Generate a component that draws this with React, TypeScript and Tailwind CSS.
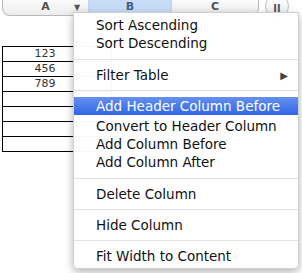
import React from 'react';

const font = { fontFamily: '"DejaVu Sans", "Liberation Sans", sans-serif' };

type Entry = { label?: string; sep?: number; active?: boolean; submenu?: boolean };

const entries: Entry[] = [
  { label: 'Sort Ascending' },
  { label: 'Sort Descending' },
  { sep: 14 },
  { label: 'Filter Table', submenu: true },
  { sep: 13 },
  { label: 'Add Header Column Before', active: true },
  { label: 'Convert to Header Column' },
  { label: 'Add Column Before' },
  { label: 'Add Column After' },
  { sep: 14 },
  { label: 'Delete Column' },
  { sep: 13 },
  { label: 'Hide Column' },
  { sep: 13 },
  { label: 'Fit Width to Content' },
];

const rows = ['123', '456', '789', '', '', '', ''];

function ColumnHeader() {
  return (
    <div className="flex items-start">
      <div className="ml-[2px] flex h-[16px] overflow-hidden rounded-b-[8px] border border-t-0 border-[#b9b9b9] bg-gradient-to-b from-[#fbfbfb] to-[#ececec] text-[11px] font-bold leading-[14px]">
        <div className="relative flex w-[85px] justify-center text-[#505050]">
          A
          <span className="absolute left-[71px] top-[1px] text-[8px] text-[#555]">▼</span>
        </div>
        <div className="flex w-[84px] justify-center border-x border-[#c4d3e6] bg-[#c7dcf6] text-[#3f5f8a]">B</div>
        <div className="flex w-[86px] justify-center text-[#505050]">C</div>
      </div>
      <div className="ml-[6px] -mt-[6px] flex h-[24px] w-[24px] items-center justify-center rounded-full border border-[#bdbdbd] bg-gradient-to-b from-[#ffffff] to-[#eeeeee] pt-[6px] text-[10px] font-bold leading-none text-[#555]">
        II
      </div>
    </div>
  );
}

function Sheet() {
  return (
    <div className="ml-[2px] mt-[28px] w-[110px] border-t border-black">
      {rows.map((value, i) => (
        <div key={i} className="flex h-[15px] border-x border-b border-black">
          <div className="w-[84px] text-center text-[11px] leading-[14px] text-[#333]">{value}</div>
        </div>
      ))}
    </div>
  );
}

function ColumnMenu() {
  return (
    <div className="absolute left-[73px] top-[12px] w-[226px] rounded-b-[5px] border border-[#d0d0d0] bg-white/[0.97] pt-[3px] pb-[3px] shadow-[0_3px_8px_rgba(0,0,0,0.3)]">
      {entries.map((item, i) =>
        item.sep ? (
          <div key={i} className={item.sep === 14 ? 'flex h-[14px] items-center' : 'flex h-[13px] items-center'}>
            <div className="h-px w-full bg-[#e2e2e2]" />
          </div>
        ) : (
          <div
            key={i}
            className={
              item.active
                ? 'mb-[2px] flex h-[18px] items-center justify-between bg-gradient-to-b from-[#6590ef] to-[#3165e6] pl-[22px] pr-[10px] text-[13.5px] text-white'
                : 'flex h-[18px] items-center justify-between pl-[22px] pr-[10px] text-[13.5px] text-[#111]'
            }
          >
            <span>{item.label}</span>
            {item.submenu && <span className="text-[10px] text-[#444]">▶</span>}
          </div>
        )
      )}
    </div>
  );
}

export default function App() {
  return (
    <div className="relative h-[273px] w-[302px] overflow-hidden bg-white" style={font}>
      <ColumnHeader />
      <Sheet />
      <ColumnMenu />
    </div>
  );
}
